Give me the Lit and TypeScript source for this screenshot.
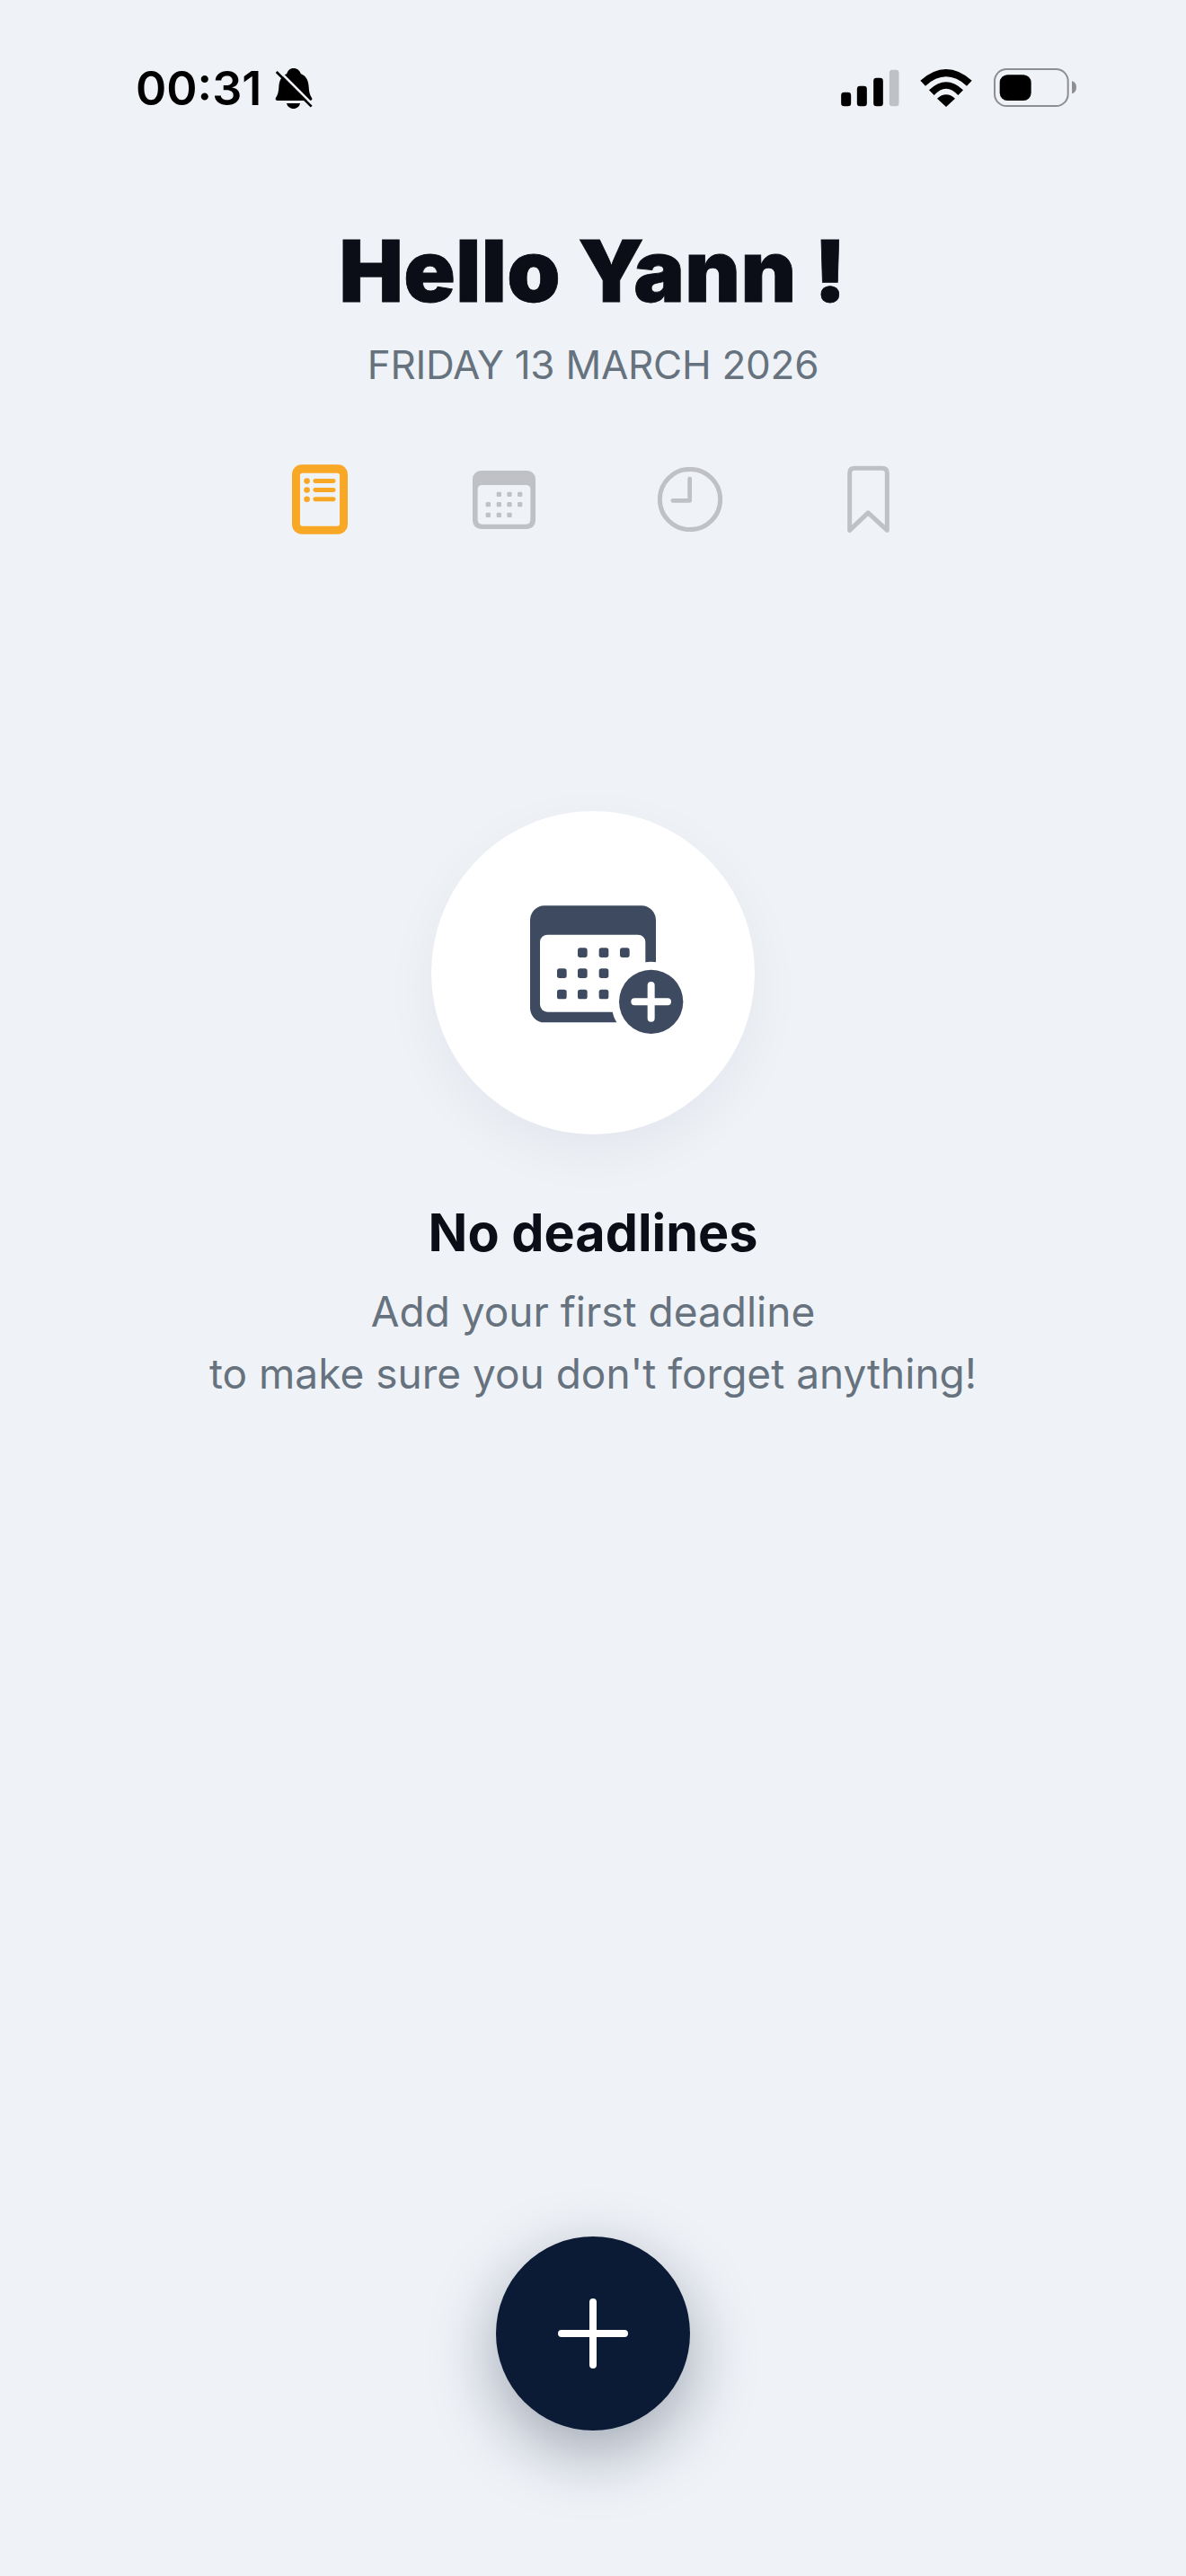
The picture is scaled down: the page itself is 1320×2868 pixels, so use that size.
import { LitElement, html, css, svg } from 'lit';
import { customElement } from 'lit/decorators.js';

const TAB_DOTS = [
  [766, 181], [801, 181], [836, 181],
  [730, 215], [766, 215], [801, 215], [836, 215],
  [730, 250], [766, 250], [801, 250],
];

const HERO_DOTS = [
  [249, 226], [320, 226], [390, 226],
  [180, 295], [249, 295], [320, 295],
  [180, 365], [249, 365], [320, 365],
];

@customElement('app-root')
export class AppRoot extends LitElement {
  static styles = css`
    :host {
      display: block;
      font-family: Inter, 'Liberation Sans', sans-serif;
    }

    svg {
      display: block;
      flex: none;
    }

    .screen {
      height: 2868px;
      box-sizing: border-box;
      display: flex;
      flex-direction: column;
      align-items: center;
      background: #eff2f7;
      overflow: hidden;
    }

    .status {
      align-self: stretch;
      height: 75px;
      margin-top: 60px;
      padding: 0 122px 0 151px;
      display: flex;
      align-items: center;
      justify-content: space-between;
    }

    .status-left,
    .status-right {
      display: flex;
      align-items: center;
    }

    .time {
      padding-top: 2px;
      font-size: 52px;
      font-weight: 600;
      line-height: 73px;
      color: #000;
    }

    .bell {
      margin-left: 15px;
    }

    .wifi {
      margin: 0 24px 0 23px;
    }

    h1 {
      margin: 109px 0 0;
      font-size: 95px;
      font-weight: 900;
      line-height: 116px;
      letter-spacing: 0.4px;
      -webkit-text-stroke: 0.8px #0b0d17;
      color: #0b0d17;
    }

    .date {
      margin-top: 20px;
      font-size: 44px;
      line-height: 52px;
      letter-spacing: -0.25px;
      color: #67727f;
    }

    .tabs {
      margin-top: 85px;
      padding-right: 5px;
      display: flex;
      align-items: center;
      gap: 136px;
    }

    .tab-wide {
      margin-right: 3px;
    }

    .hero {
      margin-top: 308px;
      width: 360px;
      height: 360px;
      border-radius: 50%;
      background: #fff;
      box-shadow: 0 20px 60px rgba(15, 23, 42, 0.05);
      display: flex;
      align-items: center;
      justify-content: center;
    }

    h2 {
      margin: 73px 0 0;
      font-size: 57.5px;
      font-weight: 700;
      line-height: 72px;
      color: #0b0d17;
    }

    .hint {
      margin-top: 18px;
      font-size: 46px;
      line-height: 69px;
      text-align: center;
      color: #67727f;
    }

    .fab {
      margin-top: auto;
      margin-bottom: 162px;
      width: 216px;
      height: 216px;
      padding: 0;
      border: none;
      border-radius: 50%;
      background: #0b1b35;
      box-shadow: 0 24px 72px rgba(11, 27, 53, 0.35);
      display: flex;
      align-items: center;
      justify-content: center;
    }
  `;

  render() {
    return html`
      <div class="screen">
        <div class="status">
          <div class="status-left">
            <span class="time">00:31</span>
            <svg class="bell" width="42" height="46" viewBox="558 72 126 138">
              <path
                fill="#000"
                d="M620 75c-12 0-20 8-22 18-20 8-26 26-27 44-1 18-4 28-10 36-3 5 0 10 6 10h108c6 0 9-5 6-10-6-8-9-18-10-36-1-18-7-36-27-44-2-10-12-18-24-18zM597 192h45c-2 11-11 18-22 18s-21-7-23-18z"
              />
              <path stroke="#eff2f7" stroke-width="8" d="M569 81 692 204" />
              <path stroke="#000" stroke-width="8" d="M563 87 680 203" />
            </svg>
          </div>
          <div class="status-right">
            <svg width="65" height="42" viewBox="112 76 194 126">
              <rect x="112" y="153" width="33" height="47" rx="10" />
              <rect x="165" y="132" width="33" height="68" rx="10" />
              <rect x="220" y="105" width="32" height="95" rx="10" />
              <rect x="273" y="78" width="32" height="122" rx="10" fill="#c0c1c6" />
            </svg>
            <svg class="wifi" width="58" height="42" viewBox="375 75 172 126">
              <path d="M375 113Q461 37 547 113L530 131Q461 69 392 131Z" />
              <path d="M404 145Q461 91 518 145L501 162Q461 118 421 162Z" />
              <path d="M431 173Q461 147 491 173L461 201Z" />
            </svg>
            <svg width="92" height="43" viewBox="617 75 276 129">
              <rect x="620" y="78" width="245" height="123" rx="40" fill="none" stroke="#8e8e93" stroke-width="6" />
              <rect x="637" y="97" width="105" height="86" rx="26" />
              <path d="M878 118c9 2 15 9 15 21s-6 19-15 21z" fill="#8e8e93" />
            </svg>
          </div>
        </div>

        <h1>Hello Yann !</h1>
        <div class="date">FRIDAY 13 MARCH 2026</div>

        <div class="tabs">
          <svg class="tab-wide" width="62" height="78" viewBox="75 82 187 233">
            <rect x="75" y="82" width="187" height="233" rx="32" fill="#f9a825" />
            <rect x="102" y="110" width="133" height="178" rx="8" fill="#eff2f7" />
            <circle cx="125" cy="137" r="10" fill="#f9a825" />
            <circle cx="125" cy="167" r="10" fill="#f9a825" />
            <circle cx="125" cy="198" r="10" fill="#f9a825" />
            <path d="M153 137H214M153 167H214M153 198H214" stroke="#f9a825" stroke-width="15" stroke-linecap="round" />
          </svg>
          <svg width="70" height="65" viewBox="678 102 210 195">
            <rect x="678" y="102" width="210" height="195" rx="28" fill="#c0c1c6" />
            <path
              d="M695 164a14 14 0 0 1 14-14H857a14 14 0 0 1 14 14V267a14 14 0 0 1-14 14H709a14 14 0 0 1-14-14Z"
              fill="#eff2f7"
            />
            ${TAB_DOTS.map(
              ([x, y]) => svg`<rect x=${x - 8} y=${y - 8} width="16" height="16" rx="4" fill="#c0c1c6" />`
            )}
          </svg>
          <svg class="tab-wide" width="72" height="72" viewBox="157 91 214 214">
            <circle cx="264" cy="198" r="100" fill="none" stroke="#c0c1c6" stroke-width="15" />
            <path
              d="M263 130V202H207"
              fill="none"
              stroke="#c0c1c6"
              stroke-width="14"
              stroke-linecap="round"
              stroke-linejoin="round"
            />
          </svg>
          <svg width="47" height="76" viewBox="790 87 142 226">
            <path
              d="M798 304V112Q798 95 815 95H907Q924 95 924 112V304L860 245Z"
              fill="none"
              stroke="#c0c1c6"
              stroke-width="15"
              stroke-linejoin="round"
            />
          </svg>
        </div>

        <div class="hero">
          <svg width="220" height="190" viewBox="-30 24 660 570">
            <rect x="90" y="85" width="420" height="390" rx="48" fill="#3d4a5f" />
            <rect x="123" y="182" width="352" height="258" rx="25" fill="#fff" />
            ${HERO_DOTS.map(
              ([x, y]) => svg`<rect x=${x} y=${y} width="32" height="32" rx="8" fill="#3d4a5f" />`
            )}
            <circle cx="494" cy="406" r="134" fill="#fff" />
            <circle cx="494" cy="406" r="107" fill="#3d4a5f" />
            <path d="M439 406H549M494 351V461" stroke="#fff" stroke-width="24" stroke-linecap="round" />
          </svg>
        </div>

        <h2>No deadlines</h2>
        <div class="hint">Add your first deadline<br />to make sure you don't forget anything!</div>

        <button class="fab" aria-label="Add deadline">
          <svg width="78" height="78" viewBox="0 0 78 78">
            <path d="M4 39H74M39 4V74" stroke="#fff" stroke-width="8" stroke-linecap="round" />
          </svg>
        </button>
      </div>
    `;
  }
}
